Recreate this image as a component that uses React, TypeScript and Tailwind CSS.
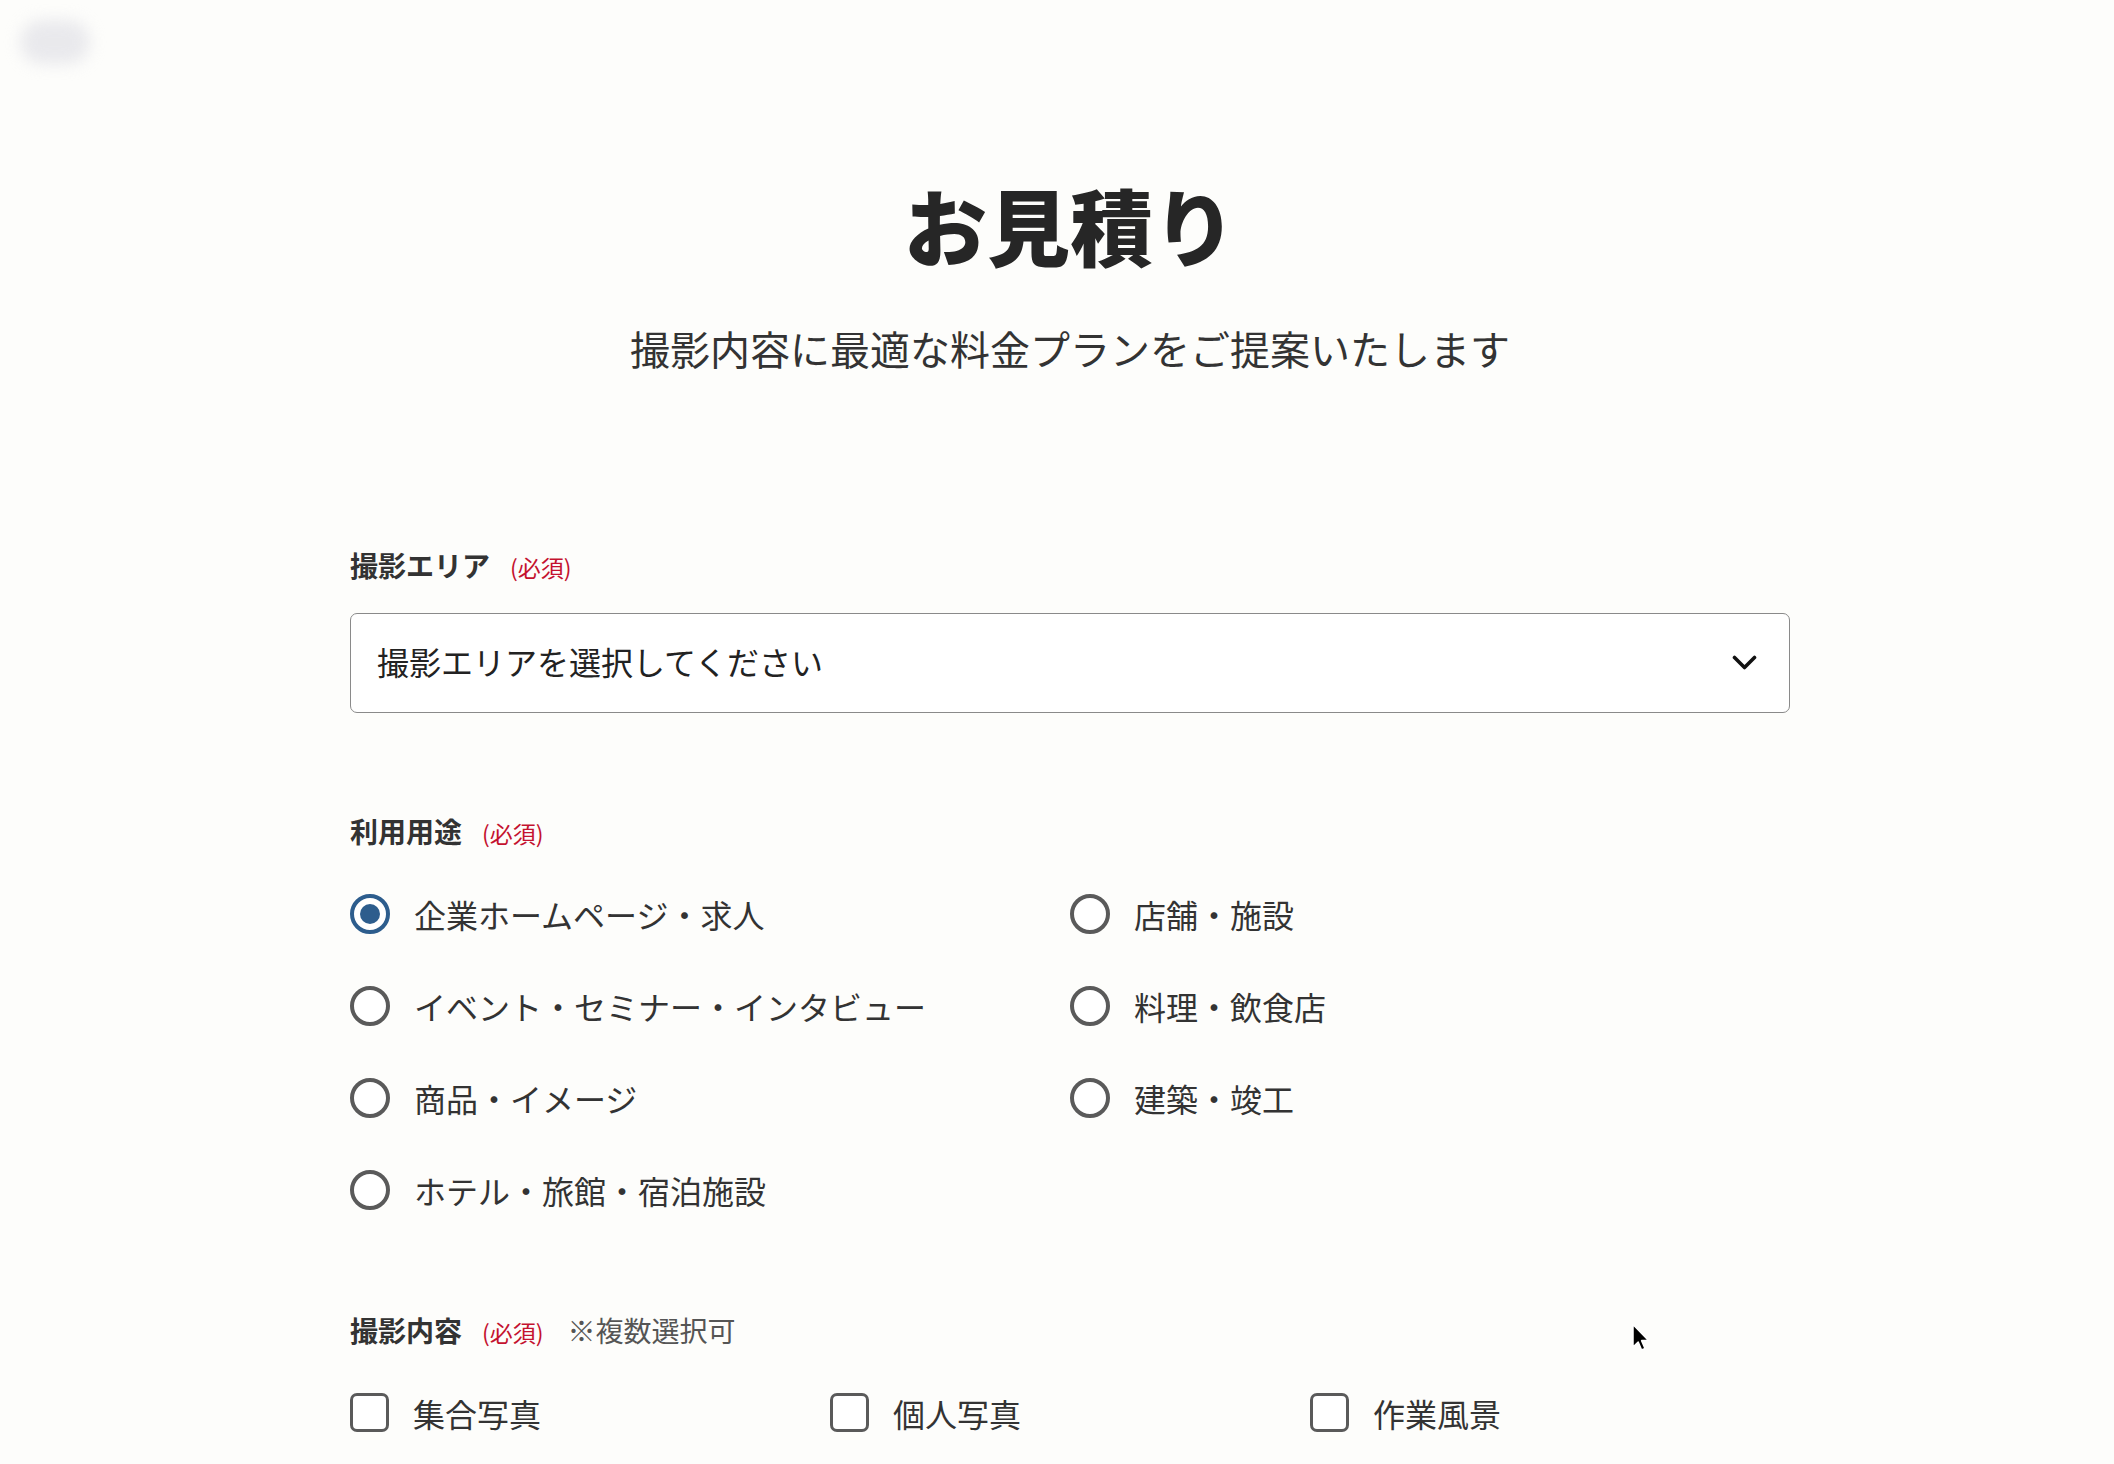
import React, { useState } from 'react';

const usages = [
  '企業ホームページ・求人',
  '店舗・施設',
  'イベント・セミナー・インタビュー',
  '料理・飲食店',
  '商品・イメージ',
  '建築・竣工',
  'ホテル・旅館・宿泊施設',
];

const contents = ['集合写真', '個人写真', '作業風景'];

function Required() {
  return <span className="ml-[20px] text-[23px] font-normal text-[#c4122f]">(必須)</span>;
}

export default function App() {
  const [usage, setUsage] = useState(0);
  const [checked, setChecked] = useState<string[]>([]);

  const toggle = (c: string) =>
    setChecked((prev) => (prev.includes(c) ? prev.filter((x) => x !== c) : [...prev, c]));

  return (
    <div className="relative h-[1464px] overflow-hidden bg-[#fdfdfb] font-['Noto_Sans_CJK_JP',sans-serif] text-[#333]">
      <header className="h-[80px] px-[20px] pt-[20px]">
        <div className="h-[44px] w-[70px] rounded-full bg-[#dcdce3] opacity-60 blur-[8px]" />
      </header>

      <main className="pl-[350px]">
        <div className="w-[1440px]">
          <h1 className="mt-[103px] text-center text-[83px] font-black leading-none text-[#262626]">お見積り</h1>
          <p className="mt-[62px] text-center text-[40px] leading-none text-[#333]">
            撮影内容に最適な料金プランをご提案いたします
          </p>

          <div className="mt-[183px] flex items-baseline text-[28px] font-bold leading-none">
            撮影エリア
            <Required />
          </div>
          <button className="mt-[34px] flex h-[100px] w-full items-center justify-between rounded-[7px] border border-[#8a8a8a] bg-white pl-[26px] pr-[32px] pb-[4px] text-left">
            <span className="text-[32px] leading-none text-[#222]">撮影エリアを選択してください</span>
            <svg width="25" height="16" viewBox="0 0 25 16" fill="none" className="mt-[4px]">
              <path d="M2.5 2.5 L12.5 12.5 L22.5 2.5" stroke="#111" strokeWidth="3.6" strokeLinecap="round" strokeLinejoin="round" />
            </svg>
          </button>

          <div className="mt-[104px] flex items-baseline text-[28px] font-bold leading-none">
            利用用途
            <Required />
          </div>
          <div className="mt-[49px] grid grid-cols-2 gap-y-[52px]">
            {usages.map((u, i) => (
              <label key={u} className="flex h-[40px] cursor-pointer items-center gap-[24px]" onClick={() => setUsage(i)}>
                {usage === i ? (
                  <span className="flex h-[40px] w-[40px] items-center justify-center rounded-full border-[4px] border-[#2d5d8d] bg-white">
                    <span className="h-[20px] w-[20px] rounded-full bg-[#2d5d8d]" />
                  </span>
                ) : (
                  <span className="h-[40px] w-[40px] rounded-full border-[4px] border-[#5a5a5a] bg-white" />
                )}
                <span className="text-[32px] leading-none">{u}</span>
              </label>
            ))}
          </div>

          <div className="mt-[106px] flex items-baseline text-[28px] font-bold leading-none">
            撮影内容
            <Required />
            <span className="ml-[24px] text-[28px] font-normal text-[#555]">※複数選択可</span>
          </div>
          <div className="mt-[49px] grid grid-cols-3">
            {contents.map((c) => (
              <label key={c} className="flex h-[39px] cursor-pointer items-center gap-[24px]" onClick={() => toggle(c)}>
                <span
                  className={`h-[39px] w-[39px] rounded-[7px] border-[3.5px] ${
                    checked.includes(c) ? 'border-[#2d5d8d] bg-[#2d5d8d]' : 'border-[#5a5a5a] bg-white'
                  }`}
                />
                <span className="text-[32px] leading-none">{c}</span>
              </label>
            ))}
          </div>
        </div>
      </main>

      {/* mouse pointer in the capture */}
      <svg className="absolute left-[1631px] top-[1323px]" width="20" height="30" viewBox="0 0 20 30">
        <path d="M2 1.5 L2 24 L7.2 19 L10.6 27 L14 25.5 L10.6 17.6 L17.5 17.6 Z" fill="#000" stroke="#fff" strokeWidth="1.5" strokeLinejoin="round" />
      </svg>
    </div>
  );
}
